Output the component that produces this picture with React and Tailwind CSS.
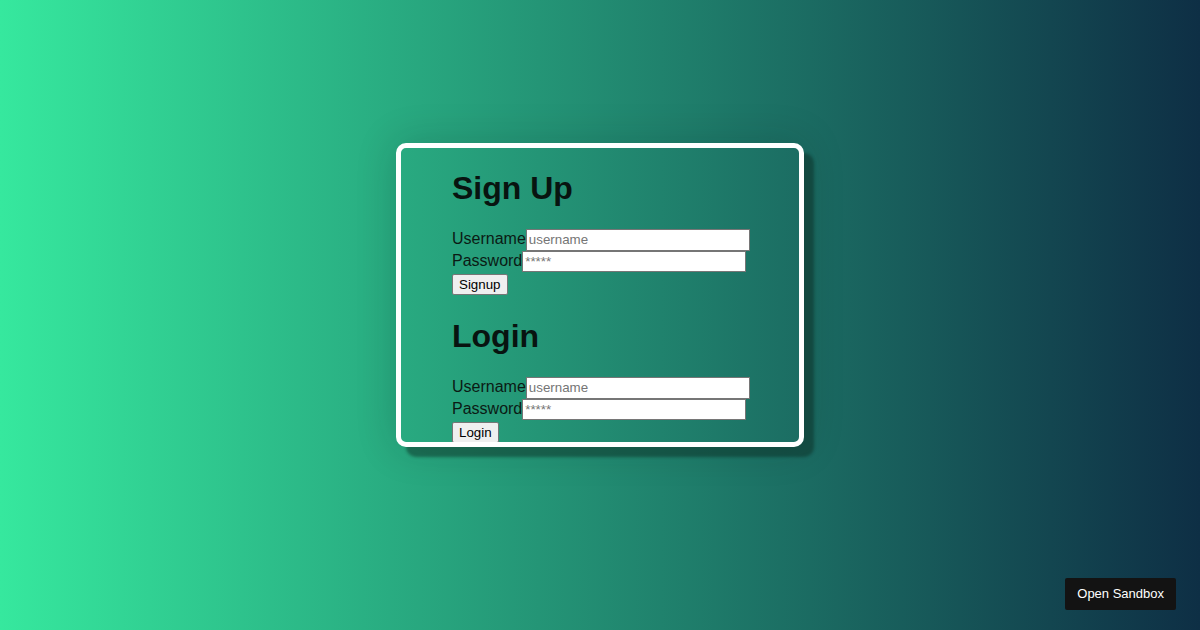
import React from "react";

// Simple auth page: signup + login forms in one bordered card
const Field = ({ label, type = "text", placeholder, first }) => (
  <div className={`flex items-baseline ${first ? "mt-[1px]" : ""}`}>
    <label className="text-[16px] leading-[18px] text-[#0b1a14]">{label}</label>
    <input
      type={type}
      placeholder={placeholder}
      className="w-[224px] h-[21.5px] bg-white border border-[#767676] px-[2px] py-[1px] text-[13.33px] text-black placeholder:text-[#757575] outline-none"
      style={{ fontFamily: "'Liberation Sans', Arial, sans-serif" }}
    />
  </div>
);

const Form = ({ title, button }) => (
  <div>
    <h1 className="text-[32px] leading-[37px] font-bold text-[#081410] mt-[21.5px] mb-[22.5px]">
      {title}
    </h1>
    <Field label="Username" placeholder="username" first />
    <Field label="Password" type="password" placeholder="*****" />
    <button className="h-[21px] px-[6px] mt-[0.5px] bg-[#efefef] border border-[#767676] rounded-[2px] text-[13.33px] leading-[15px] text-black">
      {button}
    </button>
  </div>
);

export default function App() {
  return (
    <div
      className="w-[1200px] h-[630px] relative flex items-start justify-center bg-[linear-gradient(to_right,#36e89e,#0e2f45)] overflow-hidden"
      style={{ fontFamily: "'Liberation Sans', Arial, sans-serif" }}
    >
      <div className="mt-[143px] w-[408px] h-[304px] border-[5px] border-white rounded-[10px] pl-[51px] overflow-hidden shadow-[10px_10px_3px_rgba(10,40,32,0.45),0_0_40px_rgba(0,30,25,0.18)]">
        <Form title="Sign Up" button="Signup" />
        <Form title="Login" button="Login" />
      </div>

      <button className="absolute right-[24px] bottom-[20px] h-[32px] px-[12px] bg-[#131313] rounded-[2px] text-[13px] text-white">
        Open Sandbox
      </button>
    </div>
  );
}
